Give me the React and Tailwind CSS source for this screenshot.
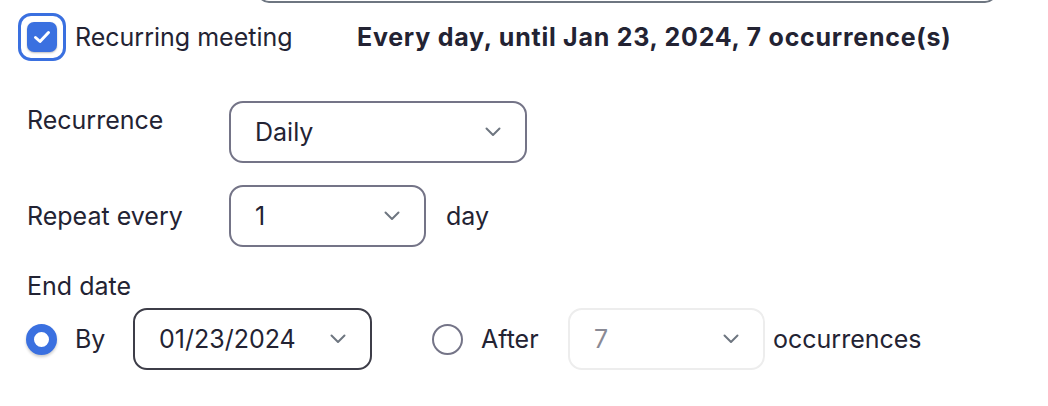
import React from "react";

function Chevron({ color = "#6e7680" }) {
  return (
    <svg width="16" height="10" viewBox="0 0 16 10" fill="none">
      <path d="M1.5 1.5 L8 8 L14.5 1.5" stroke={color} strokeWidth="2" strokeLinecap="round" strokeLinejoin="round" />
    </svg>
  );
}

function Select({ value, width, border = "border-[#747487]", text = "text-[#232333]", chevron }) {
  return (
    <div className={`${width} h-[62px] shrink-0 border-2 ${border} rounded-[14px] pl-[24px] pr-[24px] flex items-center justify-between`}>
      <span className={text}>{value}</span>
      <Chevron color={chevron} />
    </div>
  );
}

export default function App() {
  return (
    <div className="bg-white pl-[18px] font-['Inter',sans-serif] text-[25px] leading-[30px] text-[#232333]">
      {/* bottom edge of the field above */}
      <div className="ml-[239px] w-[740px] h-[40px] -mt-[37px] border-2 border-[#6e7681] rounded-[12px]" />

      {/* recurring checkbox */}
      <div className="flex items-center h-[48px] mt-[10px]">
        <div className="w-[339px] flex items-center shrink-0">
          <div className="w-[48px] h-[48px] rounded-[13px] border-[3px] border-[#3a70e0] flex items-center justify-center">
            <div className="w-[30px] h-[30px] rounded-[7px] bg-[#3a70e0] flex items-center justify-center shadow-[0_1px_2px_rgba(0,0,0,0.25)]">
              <svg width="18" height="14" viewBox="0 0 18 14" fill="none">
                <path d="M2.5 7.5 L7 11.5 L15.5 2.5" stroke="white" strokeWidth="3" strokeLinecap="round" strokeLinejoin="round" />
              </svg>
            </div>
          </div>
          <span className="ml-[9px]">Recurring meeting</span>
        </div>
        <span className="font-bold tracking-[0.75px]">Every day, until Jan 23, 2024, 7 occurrence(s)</span>
      </div>

      {/* recurrence */}
      <div className="flex items-start mt-[40px] pl-[9px]">
        <div className="w-[202px] pt-[4px] shrink-0">Recurrence</div>
        <Select value="Daily" width="w-[298px]" />
      </div>

      {/* repeat every */}
      <div className="flex items-center mt-[22px] pl-[9px]">
        <div className="w-[202px] shrink-0">Repeat every</div>
        <Select value="1" width="w-[197px]" />
        <span className="ml-[20px]">day</span>
      </div>

      {/* end date */}
      <div className="mt-[24px] pl-[9px]">End date</div>
      <div className="flex items-center mt-[7px] pl-[8px]">
        <div className="w-[107px] flex items-center shrink-0">
          <div className="w-[31px] h-[31px] rounded-full border-[8px] border-[#3a70e0] bg-white shadow-[0_2px_3px_rgba(0,0,0,0.2)]" />
          <span className="ml-[18px]">By</span>
        </div>
        <Select value="01/23/2024" width="w-[239px]" border="border-[#3d3d48]" />
        <div className="w-[136px] ml-[60px] flex items-center shrink-0">
          <div className="w-[31px] h-[31px] rounded-full border-2 border-[#747487] bg-white" />
          <span className="ml-[18px]">After</span>
        </div>
        <Select value="7" width="w-[197px]" border="border-[#ededed]" text="text-[#8a8a95]" />
        <span className="ml-[8px]">occurrences</span>
      </div>
      <div className="h-[35px]" />
    </div>
  );
}
